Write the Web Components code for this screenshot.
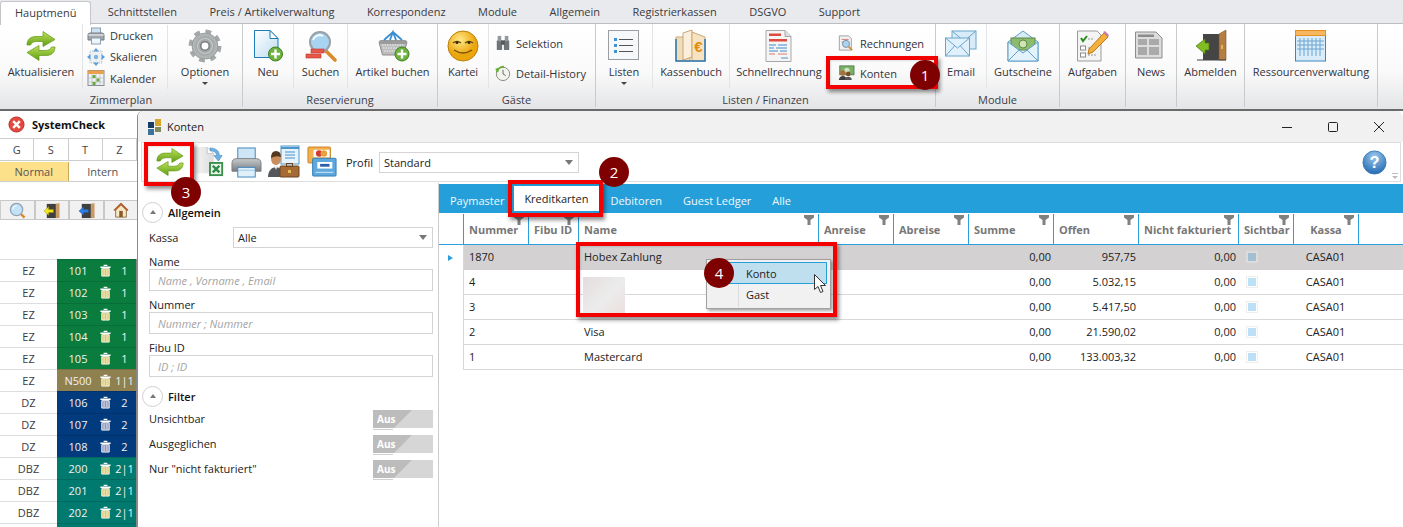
<!DOCTYPE html>
<html lang="de"><head><meta charset="utf-8"><title>Konten</title>
<style>
html,body{margin:0;padding:0;background:#fff}
body{width:1403px;height:527px;overflow:hidden;position:relative;font:11px "Open Sans","Noto Sans",sans-serif;color:#2b2b33}
.main{display:flex;height:417px}
</style></head><body>
<script>
const ICONS={
refresh:[32,`<defs><linearGradient id="g" x1="0" y1="0" x2="0" y2="1"><stop offset="0" stop-color="#bfe05a"/><stop offset="1" stop-color="#5f9e12"/></linearGradient></defs>
<path d="M2 15C2 9 6 6.500 11 6.500H18V1.500L30 9.500 18 16.500V11.500H12C8 11.500 6.500 13 5.500 15Z" fill="url(#g)" stroke="#5f9a18" stroke-width=".7"/>
<path d="M30 17C30 23 26 25.500 21 25.500H14V30.500L2 22.500 14 15.500V20.500H20C24 20.500 25.500 19 26.500 17Z" fill="url(#g)" stroke="#5f9a18" stroke-width=".7"/>`],
printS:[18,`<rect x="4.500" y="1" width="9" height="6" fill="#cfe2f3" stroke="#8aa0b3"/><path d="M1 8q0-2 2-2H15q2 0 2 2V13H1Z" fill="#a4a8ae" stroke="#777c84"/><rect x="1.500" y="7" width="15" height="2" fill="#cfd1d4"/><rect x="4.500" y="11" width="9" height="6" fill="#eef6fc" stroke="#8aa0b3"/>`],
scale:[18,`<rect x="3" y="3" width="12" height="12" fill="#eef0f2" stroke="#bbb" stroke-dasharray="1 1"/><path d="M9 0l3 3.500H6zM9 18l3-3.500H6zM0 9l3.500-3v6zM18 9l-3.500-3v6z" fill="#5b9fd8"/><circle cx="9" cy="9" r="2.200" fill="#7fb3e0"/>`],
cal:[18,`<rect x="1" y="1.500" width="16" height="15" fill="#eef1f4" stroke="#888e95"/><rect x="1" y="1.500" width="16" height="3.500" fill="#eda04a"/><path d="M1 9h16M1 13h16M5 5v11M9 5v11M13 5v11" stroke="#b9bec4" stroke-width=".7"/><rect x="9.500" y="9.500" width="3" height="3" fill="#6aaa3a"/><rect x="5.500" y="13" width="3" height="3" fill="#6aaa3a"/><rect x="5.500" y="6" width="3" height="3" fill="#6aaa3a"/>`],
gear:[32,`<defs><radialGradient id="g"><stop offset=".3" stop-color="#8f9494"/><stop offset="1" stop-color="#b8bcbc"/></radialGradient></defs>
<circle cx="16" cy="16" r="13.500" fill="none" stroke="#a4a8a8" stroke-width="4" stroke-dasharray="5.400 5.200"/><circle cx="16" cy="16" r="12" fill="url(#g)" stroke="#9a9e9e"/><circle cx="16" cy="16" r="7" fill="#a5a9a9" stroke="#c8cbcb"/><circle cx="16" cy="16" r="4" fill="#fff" stroke="#7b7f7f" stroke-width="1.500"/>`],
neu:[32,`<defs><linearGradient id="g" x1="0" y1="0" x2="1" y2="1"><stop offset="0" stop-color="#fff"/><stop offset="1" stop-color="#bcdcf0"/></linearGradient></defs>
<path d="M2.500 .500H18L26 8.500V27.500H2.500Z" fill="url(#g)" stroke="#1f7db8"/><path d="M18 .500V8.500H26Z" fill="#fff" stroke="#1f7db8"/><circle cx="23.500" cy="24" r="7" fill="#6db33f" stroke="#3f7f1e"/><path d="M23.500 19.500v9M19 24h9" stroke="#fff" stroke-width="2.400"/>`],
search:[32,`<path d="M21 21l9 9" stroke="#d98a2b" stroke-width="3.600" stroke-linecap="round"/><circle cx="15" cy="12" r="10" fill="#a8d4f2" stroke="#9aa0a6" stroke-width="2"/><path d="M8 10a7 7 0 0 1 10-4" stroke="#fff" stroke-width="1.600" fill="none"/><rect x="6" y="19" width="13" height="4" fill="#e8584a" stroke="#b8352a" stroke-width=".6"/><rect x="1" y="24" width="15" height="4" fill="#e8584a" stroke="#b8352a" stroke-width=".6"/>`],
basket:[32,`<path d="M2 12H30L26.500 25H5.500Z" fill="#bdbdbd" stroke="#8a8a8a"/><rect x="2" y="10" width="28" height="4" rx="2" fill="#9b9b9b"/><path d="M5 15h21M6 18h20M7 21h18" stroke="#efefef" stroke-dasharray="1.500 1"/><path d="M7 10 16 2l9 8M13 10 16 2l3 8" stroke="#3b8fd0" stroke-width="1.800" fill="none"/><circle cx="25" cy="24" r="7" fill="#6db33f" stroke="#3f7f1e"/><path d="M25 19.500v9M20.500 24h9" stroke="#fff" stroke-width="2.400"/>`],
smile:[32,`<defs><radialGradient id="g" cx=".4" cy=".3"><stop offset="0" stop-color="#ffe98a"/><stop offset="1" stop-color="#eba60d"/></radialGradient></defs><circle cx="16" cy="16" r="15" fill="url(#g)" stroke="#b98009"/><path d="M6 13q4-3 8 0M18 13q4-3 8 0" stroke="#6b4a05" stroke-width="1.500" fill="#fff8d8"/><circle cx="10" cy="12.500" r="1.500" fill="#3a2a05"/><circle cx="22" cy="12.500" r="1.500" fill="#3a2a05"/><path d="M7 20q9 6 18 0" stroke="#7a5205" stroke-width="1.500" fill="none"/>`],
binoc:[18,`<rect x="2" y="6" width="6" height="11" rx="1" fill="#6f7478"/><rect x="10" y="6" width="6" height="11" rx="1" fill="#6f7478"/><rect x="3" y="1" width="4" height="6" fill="#93989c"/><rect x="11" y="1" width="4" height="6" fill="#93989c"/><rect x="7" y="6" width="4" height="5" fill="#55595c"/>`],
clock:[18,`<circle cx="9" cy="10" r="7.500" fill="#f4f4ee" stroke="#7e8278"/><path d="M9 5.500V10l3 2" stroke="#555" fill="none"/><path d="M2 8a7.500 7.500 0 0 1 8-6" stroke="#67ad35" stroke-width="2" fill="none"/><path d="M0 4.500 4 3l0 5z" fill="#67ad35"/>`],
list:[32,`<rect x=".500" y=".500" width="30" height="29" fill="#f7f8f9" stroke="#9a9ea3"/><rect x="6" y="8" width="3" height="3" fill="#3d93d6"/><rect x="6" y="14" width="3" height="3" fill="#3d93d6"/><rect x="6" y="20" width="3" height="3" fill="#3d93d6"/><path d="M11 9.500h14M11 15.500h14M11 21.500h14" stroke="#555"/>`],
book:[32,`<path d="M1 7H15V31H1Z" fill="#f0dcb9" stroke="#caa878"/><path d="M8 3 17 0V27L8 30Z" fill="#fbeedb" stroke="#c9a878"/><path d="M17 2 30 7V31H17Z" fill="#f7e3bf" stroke="#caa878"/><path d="M1 9V31H30V9" fill="none" stroke="#2a78b8" stroke-width="1.500"/><text x="23.500" y="22" font-family="Liberation Sans" font-size="15" font-weight="700" fill="#e48a12" text-anchor="middle">€</text>`],
invoice:[32,`<path d="M3 .500H22L28 6.500V31.500H3Z" fill="#f5f5f5" stroke="#a8a8a8"/><path d="M22 .500V6.500H28" fill="#ddd" stroke="#a8a8a8"/><rect x="6" y="3.500" width="12" height="2.500" fill="#e04a40"/><rect x="6" y="9" width="18" height="2.500" fill="#e04a40"/><path d="M6 15h7M15 15h9M6 18h5M13 18h11M6 21h9M17 21h7" stroke="#3d8ad0"/><path d="M6 24h6M15 24h9" stroke="#e0786f"/><path d="M18 28h7" stroke="#4a90c8"/>`],
rech:[18,`<path d="M1.500 1H12L15 4V17H1.500Z" fill="#f2f2f2" stroke="#9a9a9a"/><path d="M4 5h8M4 8h4" stroke="#c77"/><circle cx="9" cy="10" r="4" fill="#a8d4f2" stroke="#7c8a96"/><path d="M12 13l4 4" stroke="#d98a2b" stroke-width="2"/>`],
konten:[18,`<rect x="2" y="1" width="16" height="10" fill="#7bb069" stroke="#4f7c45"/><circle cx="10" cy="6" r="3" fill="#cfe5bc"/><circle cx="5.500" cy="9" r="3" fill="#a86f3d"/><path d="M1 17c0-6 9-6 9 0z" fill="#3f3f3f"/><circle cx="11.500" cy="10" r="2.600" fill="#7a4d28"/><path d="M7.500 17c0-5 8-5 8 0z" fill="#555"/>`],
mail:[32,`<rect x="7" y="1" width="24" height="18" fill="#d7ecf8" stroke="#6aa6cc"/><path d="M7 1 19 11 31 1" fill="none" stroke="#6aa6cc"/><rect x=".500" y="8" width="24" height="18" fill="#e1f1fb" stroke="#6aa6cc"/><path d="M.500 8 12.500 18 24.500 8M.500 26l9-10M24.500 26l-9-10" fill="none" stroke="#6aa6cc"/>`],
voucher:[32,`<path d="M1 12 16 1 31 12V31H1Z" fill="#d8ecf8" stroke="#5f9fc8"/><rect x="4" y="8" width="24" height="12" fill="#8dbb6e" stroke="#5d8a47"/><circle cx="16" cy="14" r="4" fill="#cfe3b5" stroke="#5d8a47"/><path d="M1 12 16 23 31 12V31H1Z" fill="#e3f2fb" stroke="#5f9fc8"/><path d="M1 31 12 20M31 31 20 20" stroke="#5f9fc8"/>`],
tasks:[32,`<path d="M.500 1H20L24 5V31H.500Z" fill="#f4f4f4" stroke="#9b9b9b"/><path d="M4 8l2 3 4-5" stroke="#2a8a1e" stroke-width="2" fill="none"/><rect x="3.500" y="16" width="5" height="4" fill="#fff" stroke="#8a8a8a"/><rect x="3.500" y="23" width="5" height="4" fill="#fff" stroke="#8a8a8a"/><path d="M11 9h5M11 18h4M11 25h9" stroke="#999" stroke-dasharray="2 1"/><path d="M12 19 27 3l4 4-15 15-5 2z" fill="#f4b03a" stroke="#b9781a"/><path d="M26 2l2-1 4 4-1 2z" fill="#c77fb5"/>`],
news:[32,`<path d="M.500 2H21L27 8V28H.500Z" fill="#dcdcdc" stroke="#8c8c8c"/><rect x="3" y="4.500" width="16" height="2.500" fill="#8c8c8c"/><rect x="3" y="9" width="9" height="6" fill="#aaa"/><path d="M14 10h10M14 12h10M14 14h10M3 18h9M3 20h9M3 22h9M3 24h9" stroke="#777"/><rect x="14" y="17" width="10" height="8" fill="#aaa"/>`],
logout:[32,`<path d="M8 4H27V30H8Z" fill="#454545"/><path d="M24 4 31 0V30L24 30Z" fill="#b57d42" stroke="#7f5527" stroke-width=".6"/><rect x="26" y="15" width="2" height="4" fill="#e6b24a"/><path d="M2 30H31" stroke="#444"/><path d="M1 16 10 9V13H14V20H10V24Z" fill="#82bb22" stroke="#4d7f10" stroke-width=".7"/>`],
res:[32,`<rect x=".500" y="1" width="30" height="30" fill="#d9ecf9" stroke="#3a86bc"/><rect x=".500" y=".500" width="30" height="5" fill="#f5b860" stroke="#e98f20"/><path d="M5 8v18M9 8v18M13 8v18M17 8v18M21 8v18M25 8v18M2 11h27M2 15h27M2 19h27" stroke="#6ba5d1"/>`],
excel:[32,`<defs><linearGradient id="f" x1="0" y1="0" x2="1" y2="0"><stop offset="0" stop-color="#f6f6f6"/><stop offset="1" stop-color="#dcdcdc"/></linearGradient></defs><path d="M-1 0H13L20 7V28H-1Z" fill="url(#f)"/><path d="M13 0V7H20Z" fill="#fff" stroke="#c4c4c4"/><path d="M16 1c6 0 10 3 10 8h3l-4 6-5-6h3c0-3-3-5-7-5z" fill="#6fb0e0" stroke="#3c84bd" stroke-width=".6"/><rect x="15" y="16" width="15" height="15" fill="#3c8f4a"/><rect x="17" y="18" width="11" height="11" fill="#eaf5ec"/><path d="M19 20l7 7M26 20l-7 7" stroke="#2f8a46" stroke-width="2.600"/>`],
print:[32,`<defs><linearGradient id="g" x1="0" y1="0" x2="0" y2="1"><stop offset="0" stop-color="#c9cbce"/><stop offset="1" stop-color="#777b80"/></linearGradient></defs><rect x="7" y="1" width="18" height="12" fill="#cfe6f7" stroke="#3f85bd"/><path d="M1 17q0-5 5-5H26q5 0 5 5V25H1Z" fill="url(#g)" stroke="#7c8087"/><rect x="7" y="21" width="18" height="10" fill="#dff0fb" stroke="#3f85bd"/><path d="M7 24h18" stroke="#9ec8e6"/>`],
person:[32,`<rect x="13" y="0" width="18" height="18" fill="#e7f3fb" stroke="#4b96ca"/><rect x="13" y="1" width="18" height="2" fill="#4b96ca"/><path d="M17 6h10M17 9h10M17 12h10" stroke="#7bb3da" stroke-width="1.300"/><ellipse cx="8" cy="13" rx="5" ry="6" fill="#c98d5e"/><path d="M3 12q0-7 5-7t5 6q-5-2-10 1z" fill="#55391f"/><path d="M0 31c0-13 16-13 16 0z" fill="#56575a"/><path d="M6 19l2 5 2-5z" fill="#eee"/><rect x="12" y="20" width="19" height="11" rx="1" fill="#a66a34" stroke="#6d4420"/><rect x="18.500" y="17.500" width="6" height="3" fill="none" stroke="#6d4420"/><rect x="20" y="24" width="3" height="3" fill="#e2bb5a"/>`],
cards:[32,`<rect x="1" y="0" width="24" height="17" rx="1" fill="#f3b04d" stroke="#c57f22"/><rect x="7" y="3" width="17" height="8" fill="#fff"/><circle cx="13" cy="7" r="3.500" fill="#d13a32"/><circle cx="18" cy="7" r="3.500" fill="#e9a13b"/><rect x="6" y="12" width="25" height="19" rx="1" fill="#5ea8dd" stroke="#2f7db4"/><rect x="11" y="16" width="16" height="7" fill="#fff"/><rect x="14" y="18" width="10" height="3" fill="#2b5ea8"/><path d="M9 27h19" stroke="#d8ecfa"/>`],
help:[26,`<defs><radialGradient id="g" cx=".5" cy=".25" r=".85"><stop offset="0" stop-color="#9cc8ee"/><stop offset="1" stop-color="#145ea8"/></radialGradient></defs><circle cx="13" cy="13" r="12" fill="url(#g)" stroke="#3f7fb8"/><text x="13" y="19" font-family="Liberation Sans" font-size="17" font-weight="700" fill="#fff" text-anchor="middle">?</text>`],
logo:[16,`<rect x="0" y="3" width="6" height="6" fill="#173e62"/><rect x="7" y="0" width="6" height="7" fill="#d3a72e"/><rect x="0" y="10" width="6" height="6" fill="#3f729b"/><rect x="7" y="8" width="6" height="5" fill="#7f8c60"/>`],
err:[18,`<circle cx="9" cy="9" r="8" fill="#e5483e" stroke="#b52c25"/><path d="M5.500 5.500l7 7M12.500 5.500l-7 7" stroke="#fff" stroke-width="2.600"/>`],
glass:[18,`<path d="M12 12l4.500 4.500" stroke="#d98a2b" stroke-width="2.600"/><circle cx="8" cy="8" r="6.500" fill="#c2e2f7" stroke="#8fa3b3" stroke-width="1.400"/><path d="M4 8a4 4 0 0 1 4-4" stroke="#fff" fill="none"/>`],
doorIn:[18,`<rect x="4" y="2" width="11" height="15" fill="#3f3f3f"/><path d="M13.500 2l4-1v16h-4z" fill="#c89a66"/><path d="M1 9.500l5-4.500v3h5v3H6v3z" fill="#f3e81c" stroke="#a09610" stroke-width=".5"/>`],
doorOut:[18,`<rect x="4" y="2" width="11" height="15" fill="#3f3f3f"/><path d="M13.500 2l4-1v16h-4z" fill="#c89a66"/><path d="M1 9.500l5-4.500v3h5v3H6v3z" fill="#2f7fe6" stroke="#1f5aa8" stroke-width=".5"/>`],
house:[18,`<path d="M9 1 1 9h2v8h12V9h2z" fill="#f6e8c6" stroke="#8a6a3c"/><path d="M9 1 1 9l1.500 1L9 4l6.500 6L17 9z" fill="#b8602c"/><rect x="7" y="10" width="4" height="7" fill="#8a5a2b"/>`],
trash:[14,`<path d="M5 1.500h4M1.500 3.500h11" stroke="#fff" stroke-width="1.400"/><path d="M3 5h8v8H3z" fill="var(--t,#d9c66a)" stroke="#fff"/><path d="M5.500 6v6M8.500 6v6" stroke="#fff" stroke-width=".8"/>`],
funnel:[10,`<path d="M0 0H10V2.500L6.500 5V10H3.500V5L0 2.500Z" fill="#808080"/>`]
};
const def=(n,c)=>customElements.define(n,c);
const root=(el,html)=>{const s=el.attachShadow({mode:'open'});s.innerHTML=html;return s};

def('k-icon',class extends HTMLElement{connectedCallback(){
 const n=this.getAttribute('name'),w=this.getAttribute('s')||ICONS[n][0],[vb,c]=ICONS[n];
 root(this,`<style>:host{display:block;flex:none;width:${w}px;height:${w}px}svg{display:block;width:100%;height:100%;overflow:visible}</style><svg viewBox="0 0 ${vb} ${vb}" aria-hidden="true">${c}</svg>`);
}});

def('app-ribbon',class extends HTMLElement{connectedCallback(){root(this,`<style>
:host{display:block;height:111px;box-sizing:border-box;background:#e9eaee}
.tabs{display:flex;height:24px;box-sizing:border-box;border-bottom:1px solid #bcbdc0}
.bar{display:flex;height:85px;background:linear-gradient(#fff 0,#fafafa 55%,#e4e5e7 100%);border-bottom:2px solid #6a6a6a}
</style><div class="tabs"><slot name="tab"></slot></div><div class="bar"><slot></slot></div>`)}});

def('rb-tab',class extends HTMLElement{connectedCallback(){root(this,`<style>
:host{display:block;padding:0 16.250px;line-height:23px;height:24px;box-sizing:border-box;color:#3a3a40;white-space:nowrap}
:host([active]){background:#fff;border:1px solid #c5c6c9;border-bottom:0;border-radius:3px 3px 0 0;padding:0 14px 0 14px;margin-top:1px;line-height:21px}
</style><slot></slot>`)}});

def('rb-group',class extends HTMLElement{connectedCallback(){root(this,`<style>
:host{display:flex;flex-direction:column;flex:none;box-sizing:border-box;border-right:1px solid #c9cacd;height:83px}
.items{display:flex;height:68px;flex:none}
.lab{text-align:center;line-height:15px;color:#3d3d48}
</style><div class="items"><slot></slot></div><div class="lab">${this.getAttribute('label')||''}</div>`)}});

def('rb-big',class extends HTMLElement{connectedCallback(){const w=this.getAttribute('w'),sep=this.hasAttribute('sep'),arrow=this.hasAttribute('arrow');root(this,`<style>
:host{display:flex;flex:none;flex-direction:column;align-items:center;width:${w}px;box-sizing:border-box;padding-top:6px;height:64px;margin-bottom:4px;${sep?'border-right:1px solid #e3e4e6;':''}}
.i{height:32px;display:flex;align-items:center;justify-content:center}
.t{margin-top:2px;line-height:16px;white-space:nowrap;color:#33333c}
.a{width:0;height:0;border:3px solid transparent;border-top:3px solid #444;border-bottom:0;margin-top:2px}
</style><div class="i"><slot></slot></div><div class="t">${this.getAttribute('label')}</div>${arrow?'<div class="a"></div>':''}`)}});

def('rb-stack',class extends HTMLElement{connectedCallback(){const w=this.getAttribute('w'),sep=this.hasAttribute('sep');root(this,`<style>
:host{display:flex;flex:none;flex-direction:column;justify-content:center;width:${w}px;box-sizing:border-box;height:64px;margin-top:var(--mt,1px);padding-left:${this.getAttribute('pad')||4}px;${sep?'border-right:1px solid #e3e4e6;':''}}
</style><slot></slot>`)}});

def('rb-small',class extends HTMLElement{connectedCallback(){root(this,`<style>
:host{display:flex;align-items:center;gap:var(--g,5px);height:var(--h,22px);white-space:nowrap;color:#33333c}
</style><slot></slot><span>${this.getAttribute('label')}</span>`)}});

def('side-panel',class extends HTMLElement{connectedCallback(){
 const cell=(t)=>`<div class="c">${t}</div>`;
 root(this,`<style>
:host{display:block;flex:none;width:137px;height:416px;overflow:hidden;background:#fff;box-sizing:border-box;font-size:11px}
.head{display:flex;align-items:center;gap:7px;height:27px;padding-left:8px;font-weight:700;color:#111;font-size:11px;border-bottom:1px solid #ccc}
.gstz{display:grid;grid-template-columns:repeat(4,1fr);height:21px;border-bottom:1px solid #ccc}
.c{display:flex;align-items:center;justify-content:center;border-right:1px solid #ccc;color:#444}
.mode{display:grid;grid-template-columns:1fr 1fr;height:19px;margin-top:1px;border-bottom:1px solid #ccc}
.mode .n{background:#fde08a;border-right:1px solid #c9a958;display:flex;align-items:center;justify-content:center;color:#555}
.mode .i{display:flex;align-items:center;justify-content:center;color:#555}
.tools{display:grid;grid-template-columns:repeat(4,1fr);gap:2px;height:20px;margin-top:18px;background:#c8c8c8;padding:1px 0;box-sizing:border-box;border-left:1px solid #ccc}
.tools div{background:#f1f1f1;display:flex;align-items:center;justify-content:center}
.gap{height:39px}
</style>
<div class="head"><k-icon name="err" s="17"></k-icon>SystemCheck</div>
<div class="gstz">${['G','S','T','Z'].map(cell).join('')}</div>
<div class="mode"><div class="n">Normal</div><div class="i">Intern</div></div>
<div class="tools"><div><k-icon name="glass" s="17"></k-icon></div><div><k-icon name="doorIn" s="17"></k-icon></div><div><k-icon name="doorOut" s="17"></k-icon></div><div><k-icon name="house" s="16"></k-icon></div></div>
<div class="gap"></div><slot></slot>`)}});

def('room-row',class extends HTMLElement{connectedCallback(){const a=n=>this.getAttribute(n);root(this,`<style>
:host{display:grid;grid-template-columns:57px 79px;height:22px;border-right:1px solid #888;box-sizing:content-box}
.l{display:flex;align-items:center;justify-content:center;border-top:1px solid #ddd;color:#3a3a44;box-sizing:border-box}
.r{display:grid;grid-template-columns:42px 14px 23px;align-items:center;background:${a('c')};color:#f2f2f2;border-top:1px solid rgba(0,0,0,.12);box-sizing:border-box;--t:${a('t')||'#d9c66a'}}
.r span{text-align:center}
</style><div class="l">${a('k')}</div><div class="r"><span>${a('n')}</span><k-icon name="trash" s="13"></k-icon><span>${a('v')}</span></div>`)}});

def('k-window',class extends HTMLElement{connectedCallback(){root(this,`<style>
:host{display:flex;flex-direction:column;flex:1;min-width:0;height:416px;background:#fff;border-left:1px solid #8a8a8a;border-top-left-radius:6px;border-top-right-radius:6px;overflow:hidden;box-sizing:border-box}
.title{display:flex;align-items:center;height:31px;flex:none;background:#f1f1f1;padding-left:10px;gap:3px;color:#222;font-size:11px}
.ctl{margin-left:auto;display:flex;padding-right:1px}
.ctl svg{display:block;width:46px;height:20px}
.tb{display:flex;align-items:center;height:40px;flex:none;box-sizing:border-box;margin:0 2px 1px 3px;border:1px solid #ddd;padding-left:13px;position:relative}
.body{display:flex;flex:1;min-height:0}
</style><div class="title"><k-icon name="logo" s="16"></k-icon><span>Konten</span><div class="ctl">
<svg viewBox="0 0 46 20"><path d="M18 10.500H28" stroke="#222"/></svg>
<svg viewBox="0 0 46 20"><rect x="18.500" y="5.500" width="9" height="9" rx="1" fill="none" stroke="#222"/></svg>
<svg viewBox="0 0 46 20"><path d="M18 5l10 10M28 5 18 15" stroke="#222"/></svg></div></div>
<div class="tb"><slot name="tools"></slot></div><div class="body"><slot></slot></div>`)}});

def('k-select',class extends HTMLElement{connectedCallback(){root(this,`<style>
:host{display:flex;align-items:center;justify-content:space-between;box-sizing:border-box;border:1px solid #d4d4d4;background:#fff;padding:0 5px 0 4px;color:#222;font-weight:500;font-size:11px}
i{width:0;height:0;border:4px solid transparent;border-top:5px solid #777;border-bottom:0}
</style><span><slot></slot></span><i></i>`)}});

def('k-field',class extends HTMLElement{connectedCallback(){root(this,`<style>
:host{display:block;margin:0 5px 7px 11px}
.l{height:14px;line-height:14px;color:#222}
.b{height:22px;box-sizing:border-box;border:1px solid #d4d4d4;padding-left:8px;line-height:22px;font-style:italic;color:#a3a3a3}
</style><div class="l">${this.getAttribute('label')}</div><div class="b">${this.getAttribute('ph')}</div>`)}});

def('k-section',class extends HTMLElement{connectedCallback(){root(this,`<style>
:host{display:flex;align-items:center;height:22px;padding-left:4px;gap:5px;font-weight:600;color:#111}
.c{width:21px;height:21px;box-sizing:border-box;border:1px solid #d0d0d0;border-radius:50%;display:flex;align-items:center;justify-content:center}
.c i{width:0;height:0;border:3.500px solid transparent;border-bottom:4px solid #777;border-top:0}
</style><div class="c"><i></i></div><span>${this.getAttribute('label')}</span>`)}});

def('k-toggle',class extends HTMLElement{connectedCallback(){root(this,`<style>
:host{display:flex;justify-content:space-between;height:25px;margin:0 5px 0 11px;color:#222;line-height:24px}
.t{width:60px;height:18px;margin-top:3px;position:relative;background:#d6d6d6}
.t::before{content:"";position:absolute;inset:0;background:#bcbcbc;clip-path:polygon(0 0,39px 0,21px 100%,0 100%)}
.t span{position:absolute;left:4px;top:0;line-height:18px;font-size:10px;font-weight:700;color:#fff}
.u{position:absolute;left:0;top:19px;width:20px;height:1px;background:#d0d0d0}
</style><span>${this.getAttribute('label')}</span><div class="t"><span>Aus</span><div class="u"></div></div>`)}});

def('k-filters',class extends HTMLElement{connectedCallback(){root(this,`<style>
:host{display:block;flex:none;width:301px;box-sizing:border-box;border-right:1px solid #ccc;padding-top:18px}
</style><slot></slot>`)}});

def('k-kassa',class extends HTMLElement{connectedCallback(){root(this,`<style>
:host{display:flex;align-items:center;justify-content:space-between;height:21px;margin:4px 5px 7px 11px;color:#222}
::slotted(k-select){width:200px;height:21px}
</style><span>Kassa</span><slot></slot>`)}});

const COLS='24px 65px 50px 240px 75px 75px 85px 85px 100px 55px 65px 1fr';
const HEAD=[['Nummer'],['Fibu ID'],['Name'],['Anreise'],['Abreise'],['Summe'],['Offen'],['Nicht fakturiert'],['Sichtbar'],['Kassa','c']];
const ROWS=[['1870','Hobex Zahlung','957,75'],['4','','5.032,15'],['3','','5.417,50'],['2','Visa','21.590,02'],['1','Mastercard','133.003,32']];
def('k-grid',class extends HTMLElement{connectedCallback(){
 const hd=HEAD.map(([t,c])=>`<div class="hc ${c||''}"><span>${t}</span><k-icon name="funnel" s="10"></k-icon></div>`).join('');
 const rows=ROWS.map((r,i)=>`<div class="row ${i?'':'sel'}"><div class="ind">${i?'':'<i></i>'}</div><div class="td">${r[0]}</div><div class="td"></div><div class="td nm">${r[1]}</div><div class="td"></div><div class="td"></div><div class="td num">0,00</div><div class="td num">${r[2]}</div><div class="td num">0,00</div><div class="td"><b class="chk"><u></u></b></div><div class="td ctr">CASA01</div><div class="td"></div></div>`).join('');
 root(this,`<style>
:host{display:block;flex:1;min-width:0;position:relative;padding-top:1px;color:#222}
.tabs{display:flex;height:29px;background:#259fd9;color:#f2f8fc;align-items:stretch;box-sizing:border-box;padding-top:2px}
.tabs div{padding:0 10.500px;line-height:29px;white-space:nowrap}
.tabs div:first-child{padding-left:11px;padding-right:10px}
.tabs .on{background:#fff;color:#222;height:25px;line-height:25px;padding:0 11.500px 0 10px}
.head,.row{display:grid;grid-template-columns:${COLS}}
.head{height:30px;border-bottom:1px solid #2a9fdb;margin-top:1px}
.hc{position:relative;border-left:1px solid #2a9fdb;font-weight:700;color:#777;padding-left:5px;line-height:29px;white-space:nowrap;padding-top:1px;box-sizing:border-box}
.hc.c{text-align:center;padding-left:0}
.hc k-icon{position:absolute;right:4px;top:1px}
.head::after{content:"";border-left:1px solid #2a9fdb}
.row{height:25px;box-sizing:border-box}
.ind{display:flex;align-items:center;justify-content:center;padding-right:1px}
.ind i{width:0;height:0;border:3px solid transparent;border-left:5px solid #2a9fdb;border-right:0}
.td{border-bottom:1px solid #d8d8d8;line-height:24px;padding-left:5px;white-space:nowrap;box-sizing:border-box;position:relative}
.ind+.td{border-left:1px solid #d8d8d8}
.row.sel .td{background:#d3d1d2;border-bottom-color:#d3d1d2}
.nm{padding-left:6px}
.num{text-align:right;padding:0 2px 0 0}
.ctr{text-align:center;padding-left:0}
.chk{display:flex;align-items:center;justify-content:center;box-sizing:border-box;width:12px;height:12px;margin:6px 0 0 3px;border:1px solid #eee;background:#fff}
.chk u{display:block;width:8px;height:8px;background:#bce0f5}
.sel .chk{background:#dcdcdc;border-color:#dcdcdc}.sel .chk u{background:#a3bfd2}
.blur{position:absolute;left:144px;top:94px;width:42px;height:36px;background:linear-gradient(135deg,#e5dcdc,#ececec 55%,#ecdfdf)}
</style><div class="tabs"><div>Paymaster</div><div class="on">Kreditkarten</div><div>Debitoren</div><div>Guest Ledger</div><div>Alle</div></div>
<div class="head"><div></div>${hd}</div>${rows}<div class="blur"></div>`)}});

def('k-menu',class extends HTMLElement{connectedCallback(){root(this,`<style>
:host{position:absolute;left:706px;top:259px;width:125px;height:50px;box-sizing:border-box;background:#f1f1f1;border:1px solid #a0a0a0;box-shadow:2px 2px 3px rgba(0,0,0,.35);padding:2px 3px 2px 2px;color:#222}
.it{height:22px;line-height:22px;padding-left:37px;box-sizing:border-box;position:relative}
.it.on{background:#bfdfee;border:1px solid #26a0da;padding-left:36px;line-height:21px}
.g{position:absolute;left:31px;top:1px;bottom:1px;width:1px;background:#dcdcdc}
</style><div class="g"></div><div class="it on">Konto</div><div class="it">Gast</div>`)}});

def('k-mark',class extends HTMLElement{connectedCallback(){root(this,`<style>
:host{position:absolute;box-sizing:border-box;border:4px solid #f30000;box-shadow:2px 3px 4px rgba(0,0,0,.45),inset 1px 1px 2px rgba(0,0,0,.12);pointer-events:none}
</style>`)}});
def('k-badge',class extends HTMLElement{connectedCallback(){root(this,`<style>
:host{position:absolute;width:30px;height:30px;border-radius:50%;background:#7f0000;color:#fff;font:15px/30px "Open Sans",sans-serif;text-align:center}
</style><slot></slot>`)}});
def('k-cursor',class extends HTMLElement{connectedCallback(){root(this,`<style>:host{position:absolute;left:814px;top:274px;width:13px;height:20px}svg{display:block}</style>
<svg width="13" height="20" viewBox="0 0 13 20"><path d="M.5.5V15.500L4 12.500 6.500 18.500 9 17.500 6.500 11.500H11.500Z" fill="#fff" stroke="#333"/></svg>`)}});
def('k-tools',class extends HTMLElement{connectedCallback(){root(this,`<style>
:host{display:flex;align-items:center;flex:1;height:100%}
.sp{margin-left:auto}
.p{margin:0 6px 0 9px;color:#222}
.h{margin-right:13px}
k-select{width:200px;height:21px}
.ar{position:absolute;right:2px;bottom:2px;width:6px;height:5px;border-top:1px solid #bbb}
.ar::after{content:"";position:absolute;left:0;top:2px;border:3px solid transparent;border-top:3px solid #bbb;border-bottom:0}
</style><k-icon name="refresh" s="30"></k-icon><k-icon name="excel" s="30" style="margin-left:10px"></k-icon><k-icon name="print" s="31" style="margin-left:6px"></k-icon><k-icon name="person" s="32" style="margin-left:6px"></k-icon><k-icon name="cards" s="30" style="margin-left:7px"></k-icon><span class="p">Profil</span><k-select>Standard</k-select><span class="sp"></span><k-icon class="h" name="help" s="25"></k-icon><div class="ar"></div>`)}});

const TAB=['Schnittstellen','Preis / Artikelverwaltung','Korrespondenz','Module','Allgemein','Registrierkassen','DSGVO','Support'];
const big=(w,l,ic,x='')=>`<rb-big w="${w}" label="${l}" ${x}><k-icon name="${ic}" s="32"></k-icon></rb-big>`;
const sm=(l,ic,s=17)=>`<rb-small label="${l}"><k-icon name="${ic}" s="${s}"></k-icon></rb-small>`;
const rr=[['EZ','101','1','#0a7d3e'],['EZ','102','1','#0a7d3e'],['EZ','103','1','#0a7d3e'],['EZ','104','1','#0a7d3e'],['EZ','105','1','#0a7d3e'],['EZ','N500','1|1','#8f8050'],['DZ','106','2','#023a7e','#8a93b8'],['DZ','107','2','#023a7e','#8a93b8'],['DZ','108','2','#023a7e','#8a93b8'],['DBZ','200','2|1','#00796f'],['DBZ','201','2|1','#00796f'],['DBZ','202','2|1','#00796f'],['','','','#00796f']];
document.body.insertAdjacentHTML('beforeend',`
<app-ribbon>
<rb-tab slot="tab" active>Hauptmenü</rb-tab>${TAB.map(t=>`<rb-tab slot="tab">${t}</rb-tab>`).join('')}
<rb-group label="Zimmerplan" style="width:243px">${big(83,'Aktualisieren','refresh','sep')}<rb-stack w="85" pad="4" sep>${sm('Drucken','printS',18)}${sm('Skalieren','scale',18)}${sm('Kalender','cal',18)}</rb-stack><rb-big w="74" label="Optionen" arrow><k-icon name="gear" s="34"></k-icon></rb-big></rb-group>
<rb-group label="Reservierung" style="width:195px">${big(51,'Neu','neu','sep')}${big(54,'Suchen','search','sep')}${big(89,'Artikel buchen','basket')}</rb-group>
<rb-group label="Gäste" style="width:158px">${big(51,'Kartei','smile','sep')}<rb-stack w="106" pad="6" style="--h:30px;--g:5px;--mt:2px">${sm('Selektion','binoc',16)}${sm('Detail-History','clock',16)}</rb-stack></rb-group>
<rb-group label="Listen / Finanzen" style="width:340px">${big(57,'Listen','list','sep arrow')}${big(77,'Kassenbuch','book','sep')}${big(98,'Schnellrechnung','invoice')}<rb-stack w="107" pad="10" style="--h:30px;--g:6px;--mt:2px">${sm('Rechnungen','rech',16)}${sm('Konten','konten',16)}</rb-stack></rb-group>
<rb-group label="Module" style="width:124px">${big(51,'Email','mail','sep')}${big(72,'Gutscheine','voucher')}</rb-group>
<rb-group style="width:66px">${big(65,'Aufgaben','tasks')}</rb-group>
<rb-group style="width:51px">${big(50,'News','news')}</rb-group>
<rb-group style="width:68px">${big(67,'Abmelden','logout')}</rb-group>
<rb-group style="width:133px">${big(132,'Ressourcenverwaltung','res')}</rb-group>
</app-ribbon>
<div class="main">
<side-panel>${rr.map(r=>`<room-row k="${r[0]}" n="${r[1]}" v="${r[2]}" c="${r[3]}" ${r[4]?`t="${r[4]}"`:''}></room-row>`).join('')}</side-panel>
<k-window>
<k-tools slot="tools"></k-tools>
<k-filters>
<k-section label="Allgemein"></k-section>
<k-kassa><k-select>Alle</k-select></k-kassa>
<k-field label="Name" ph="Name , Vorname , Email"></k-field>
<k-field label="Nummer" ph="Nummer ; Nummer"></k-field>
<k-field label="Fibu ID" ph="ID ; ID"></k-field>
<k-section label="Filter" style="margin-top:8px"></k-section>
<k-toggle label="Unsichtbar"></k-toggle><k-toggle label="Ausgeglichen"></k-toggle><k-toggle label='Nur "nicht fakturiert"'></k-toggle>
</k-filters>
<k-grid></k-grid>
</k-window>
</div>
<k-menu></k-menu><k-cursor></k-cursor>
<k-mark style="left:826px;top:56px;width:112px;height:33px"></k-mark>
<k-mark style="left:508px;top:180px;width:95px;height:37px"></k-mark>
<k-mark style="left:144px;top:142px;width:50px;height:44px"></k-mark>
<k-mark style="left:576px;top:242px;width:261px;height:75px"></k-mark>
<k-badge style="left:910px;top:60px">1</k-badge>
<k-badge style="left:599px;top:157px">2</k-badge>
<k-badge style="left:171px;top:177px">3</k-badge>
<k-badge style="left:704px;top:258px">4</k-badge>
`);
</script></body></html>
